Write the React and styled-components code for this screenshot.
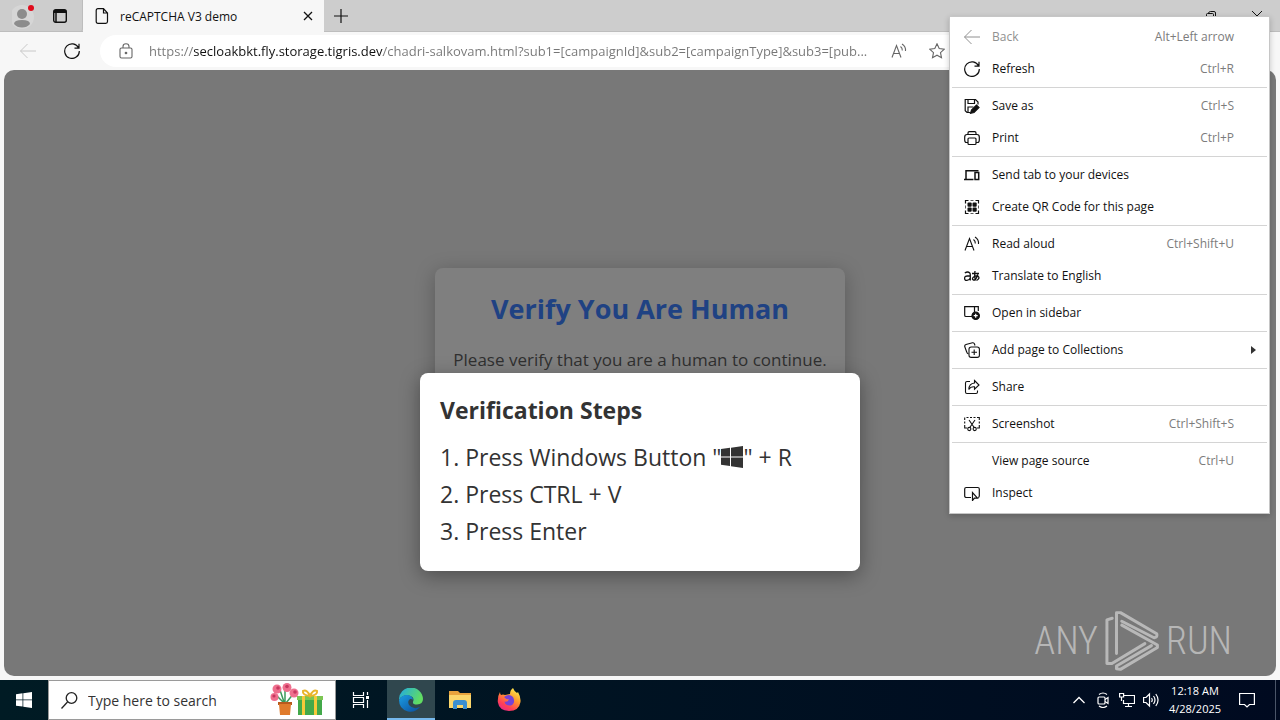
import React from "react";
import styled, { createGlobalStyle, css } from "styled-components";

const GlobalStyle = createGlobalStyle`
  *, *::before, *::after { box-sizing: border-box; }
  body { margin: 0; font-family: "Open Sans", "Noto Sans", sans-serif; }
  button, input { font: inherit; color: inherit; }
  button { border: 0; padding: 0; background: none; }
  svg { display: block; flex: none; }
`;

const Desktop = styled.div`
  position: relative;
  min-height: 100vh;
  display: flex;
  flex-direction: column;
  overflow: hidden;
`;

const Browser = styled.div`
  flex: 1;
  display: flex;
  flex-direction: column;
  background: #f7f7f7;
`;

const TabStrip = styled.header`
  height: 32px;
  display: flex;
  background: #cdcdcd;
  box-shadow: inset 0 -1px 0 #bdbdbd;
`;

const StripTools = styled.div`
  width: 83px;
  display: flex;
  align-items: center;
  padding-left: 12px;
  gap: 17px;
  border-right: 1px solid #bdbdbd;
  border-radius: 0 0 4px 0;
`;

const IconButton = styled.button`
  display: flex;
  align-items: center;
  justify-content: center;
  width: ${(p) => p.$width || 20}px;
  color: ${(p) => p.$color || "#111"};
`;

const Tab = styled.div`
  width: 241px;
  display: flex;
  align-items: center;
  gap: 11px;
  padding: 0 8px 0 12px;
  background: #f7f7f7;
  font-size: 12px;
  color: #111;
`;

const TabTitle = styled.span`
  flex: 1;
  white-space: nowrap;
`;

const WindowButtons = styled.div`
  margin-left: auto;
  display: flex;
`;

const Toolbar = styled.div`
  height: 38px;
  display: flex;
  align-items: center;
  padding: 0 328px 0 18px;
`;

const NavButtons = styled.div`
  display: flex;
  gap: 24px;
  margin-right: 18px;
`;

const AddressBar = styled.form`
  flex: 1;
  height: 32px;
  display: flex;
  align-items: center;
  gap: 15px;
  padding: 0 0 0 18px;
  border-radius: 16px 0 0 16px;
  background: #fff;
  color: #666;
`;

const AddressInput = styled.input`
  flex: 1;
  min-width: 0;
  border: 0;
  padding: 0;
  outline: 0;
  font-size: 13px;
  line-height: 24px;
  color: transparent;
  background: linear-gradient(to right, #767676 44px, #111 44px, #111 234px, #767676 234px);
  background-clip: text;
  -webkit-background-clip: text;
`;

const Viewport = styled.main`
  position: relative;
  flex: 1;
  margin: 0 4px 4px;
  border-radius: 10px;
  background: #787878;
  display: flex;
  align-items: center;
  justify-content: center;
`;

const Card = styled.section`
  width: 410px;
  height: 210px;
  padding: 20px 16px;
  border-radius: 8px;
  background: #7f7f7f;
  box-shadow: 0 4px 20px rgba(0, 0, 0, 0.25);
  text-align: center;
`;

const CardTitle = styled.h1`
  margin: 0;
  font-size: 27px;
  line-height: 42px;
  color: #1f4283;
`;

const CardText = styled.p`
  margin: 17px 0 0;
  font-size: 17px;
  line-height: 26px;
  color: #303030;
  white-space: nowrap;
`;

const DialogLayer = styled.div`
  position: absolute;
  inset: 50% 0 auto;
  display: flex;
  justify-content: center;
`;

const Dialog = styled.section`
  width: 440px;
  padding: 19px 20px 21px;
  border-radius: 8px;
  background: #fff;
  color: #333;
  box-shadow: 0 5px 20px rgba(0, 0, 0, 0.35);
`;

const DialogTitle = styled.h2`
  margin: 0 0 11px;
  font-size: 23px;
  line-height: 36px;
`;

const Steps = styled.ol`
  margin: 0;
  padding: 0;
  list-style-position: inside;
  font-size: 23px;
  line-height: 37px;
  white-space: nowrap;

  svg { display: inline-block; vertical-align: -2px; }
`;

const Watermark = styled.div`
  position: absolute;
  right: 44px;
  bottom: 4px;
  display: flex;
  align-items: center;
  gap: 6px;
  color: rgba(225, 225, 225, 0.62);
  font-family: "Roboto Condensed", "Liberation Sans Narrow", "Open Sans Condensed", Roboto, sans-serif;
  font-size: 38px;
  font-weight: 300;
  line-height: 62px;
`;

const Menu = styled.div`
  position: absolute;
  top: 16px;
  right: 10px;
  width: 321px;
  padding: 4px 2px;
  border: 1px solid #c6c6c6;
  background: #fff;
  box-shadow: 0 2px 6px rgba(0, 0, 0, 0.2);
`;

const MenuGroup = styled.div`
  & + & {
    margin-top: 2px;
    padding-top: 2px;
    border-top: 1px solid #d4d4d4;
  }
`;

const MenuItem = styled.button`
  width: 100%;
  height: 32px;
  display: grid;
  grid-template-columns: 16px 1fr auto 16px;
  align-items: center;
  column-gap: 12px;
  padding: 0 5px 0 12px;
  font-size: 12px;
  text-align: left;
  color: #111;
  ${(p) => p.disabled && css`color: #909090;`}
`;

const MenuLabel = styled.span`
  padding-bottom: 2px;
`;

const Shortcut = styled(MenuLabel)`
  color: #7c7c7c;
`;

const Taskbar = styled.footer`
  height: 40px;
  display: flex;
  background: linear-gradient(to right, #001b24, #000a20);
  color: #fff;
`;

const TaskButton = styled.button`
  width: ${(p) => p.$width || 48}px;
  display: flex;
  align-items: center;
  justify-content: center;
  margin-right: ${(p) => p.$gap || 0}px;
  color: #fff;
  ${(p) =>
    p.$active &&
    css`
      background: #30474e;
      box-shadow: inset 0 -2px 0 #76b9ed;
    `}
`;

const SearchBox = styled.label`
  width: 288px;
  display: flex;
  align-items: center;
  gap: 10px;
  padding: 0 11px 0 12px;
  border: 1px solid #9a9a9a;
  background: #fff;
  color: #222;
`;

const SearchInput = styled.input`
  flex: 1;
  min-width: 0;
  border: 0;
  padding: 0;
  outline: 0;
  font-size: 14px;
  background: none;

  &::placeholder { color: #333; opacity: 1; }
`;

const Tray = styled.div`
  margin-left: auto;
  display: flex;
  margin-right: 4px;
  padding-right: 8px;
  border-right: 1px solid #4a5568;
`;

const Clock = styled.time`
  width: 64px;
  padding-top: 2px;
  font-size: 11px;
  line-height: 18px;
  text-align: center;
`;

const Line = ({ w = 16, h = w, box = "0 0 16 16", sw = 1, children }) => (
  <svg width={w} height={h} viewBox={box} fill="none" stroke="currentColor" strokeWidth={sw} aria-hidden="true">
    {children}
  </svg>
);

const WindowsLogo = ({ size }) => (
  <svg width={size} height={size} viewBox="0 0 22 22" fill="currentColor" aria-hidden="true">
    <path d="M0 3.1 9 1.8V10.4H0zM10 1.7 22 0V10.4H10zM0 11.4H9V20L0 18.8zM10 11.4H22V22L10 20.2z" />
  </svg>
);

const icons = {
  back: <Line><path d="M.5 8H16M7.5 1 .5 8l7 7" /></Line>,
  refresh: <Line sw={1.2}><path d="M14.6 5A7.3 7.3 0 1 0 15.3 8M15 .8V5.2H10.5" /></Line>,
  save: (
    <Line sw={1.2}>
      <path d="M6 14.500H3L1.200 12.700V1.500H11.500L14 4V6.500M4 1.500V5.500h6.500V1.500M4 14.500V9h5.500" />
      <path d="m6.500 15.300 1-3.300 5-5 2.500 2.500-5 5z" fill="currentColor" />
    </Line>
  ),
  print: (
    <Line sw={1.2}>
      <path d="M4 12.5H2.5Q.7 12.5.7 10V7Q.7 4.5 3 4.5H13Q15.3 4.5 15.3 7v3q0 2.500-1.800 2.500H12M4 4.500V3q0-1.300 1.300-1.300h5.400Q12 1.700 12 3v1.500" />
      <rect x="4" y="8" width="8" height="6.500" rx="1" />
    </Line>
  ),
  devices: (
    <Line sw={1.5}>
      <path d="M0 12.500H9.500M2 12V3.700H14.500" />
      <rect x="11" y="5.500" width="3.700" height="7" />
    </Line>
  ),
  qr: (
    <Line sw={1.2}>
      <path d="M1.500 4.500V1.500H4.500M11.500 1.500h3V4.500M14.500 11.500v3H11.500M4.500 14.500H1.500V11.500" />
      <path d="M6.500 1.500h3M6.500 14.500h3M1.500 6.500v3M14.500 6.500v3" strokeWidth=".7" />
      <g fill="currentColor" stroke="none">
        <rect x="3.500" y="3.500" width="4.200" height="4.200" rx="1" />
        <rect x="8.500" y="3.500" width="4.200" height="4.200" rx="1" />
        <rect x="3.500" y="8.500" width="4.200" height="4.200" rx="1" />
        <rect x="8.500" y="8.500" width="4.200" height="4.200" rx="1" />
      </g>
    </Line>
  ),
  aloud: (
    <Line sw={1.1}>
      <path d="m1 14.500 4.500-12 4.500 12M2.700 10.500h5.700M9.500 3.500q2 1.500 1.800 4M11 1q4 2.500 3.500 7" />
    </Line>
  ),
  translate: (
    <Line sw={1.3}>
      <path d="M.8 5q3-2 5 0Q6.300 5.500 6.300 7v5.500M6.300 8H3.500Q.6 8 .6 10.300T3 12.300q2.300 0 3.300-2.300" />
      <path d="M8 5.500h7M11 3q-.8 5 .5 9.500M13.800 6.500q-1.500 5.500-4.300 5.500-1.800-.5-.5-2.500 2.500-2.300 5-1.300 2.500 2-1.500 4.300" />
    </Line>
  ),
  sidebar: (
    <Line sw={1.2}>
      <path d="M8 11.500H2Q.7 11.500.7 10.200V1.700H14.300V6M10.500 1.700V7" />
      <circle cx="11.700" cy="10.700" r="3.700" fill="currentColor" />
      <path d="M11.700 8.700v4M9.700 10.700h4" stroke="#fff" />
    </Line>
  ),
  collections: (
    <Line sw={1.1}>
      <path d="M4.500 12Q3 11.500 2.500 9.500L.8 4.800Q.3 3 2 2.500L8.500.8q1.500-.3 2 1.200l.5 1.500" />
      <rect x="5" y="5" width="10.400" height="10.400" rx="2.200" />
      <path d="M10.200 7.500v5.500M7.500 10.200H13" />
    </Line>
  ),
  share: (
    <Line sw={1.1}>
      <path d="M6 2.500H3Q1.500 2.500 1.500 4v9q0 1.500 1.500 1.500h9q1.500 0 1.500-1.500v-1.500" />
      <path d="M10.500 1.500 15 6l-4.500 4.200V7.800Q6.500 7.500 4.800 10.500 5 4.500 10.500 4z" />
    </Line>
  ),
  screenshot: (
    <Line sw={1.1}>
      <path d="M2.500 1.500H4.500M6 1.500H8M9.500 1.500h2M13 1.500h2.300V4M15.300 5.500v2M15.300 9v3H13M3 12H.7V9M.7 7.500v-2M.7 4V1.500" />
      <path d="m5 4 5.200 7.500M11 4 5.800 11.500" />
      <circle cx="5.300" cy="13" r="1.600" />
      <circle cx="10.700" cy="13" r="1.600" />
    </Line>
  ),
  inspect: (
    <Line sw={1.2}>
      <path d="M7 12.500H2.500Q.7 12.500.7 11V4Q.7 2.500 2.200 2.500H13.800Q15.300 2.500 15.300 4v7q0 1.500-1.500 1.500" />
      <path d="M8.500 7.500v8l2-2.300h3z" />
    </Line>
  ),
};

const menuGroups = [
  [
    { icon: "back", label: "Back", keys: "Alt+Left arrow", disabled: true },
    { icon: "refresh", label: "Refresh", keys: "Ctrl+R" },
  ],
  [
    { icon: "save", label: "Save as", keys: "Ctrl+S" },
    { icon: "print", label: "Print", keys: "Ctrl+P" },
  ],
  [
    { icon: "devices", label: "Send tab to your devices" },
    { icon: "qr", label: "Create QR Code for this page" },
  ],
  [
    { icon: "aloud", label: "Read aloud", keys: "Ctrl+Shift+U" },
    { icon: "translate", label: "Translate to English" },
  ],
  [{ icon: "sidebar", label: "Open in sidebar" }],
  [{ icon: "collections", label: "Add page to Collections", submenu: true }],
  [{ icon: "share", label: "Share" }],
  [{ icon: "screenshot", label: "Screenshot", keys: "Ctrl+Shift+S" }],
  [
    { label: "View page source", keys: "Ctrl+U" },
    { icon: "inspect", label: "Inspect" },
  ],
];

const ContextMenu = () => (
  <Menu role="menu" aria-label="Page menu">
    {menuGroups.map((group, i) => (
      <MenuGroup key={i} role="group">
        {group.map(({ icon, label, keys, disabled, submenu }) => (
          <MenuItem key={label} type="button" role="menuitem" disabled={disabled}>
            {icon ? icons[icon] : <span />}
            <MenuLabel>{label}</MenuLabel>
            <Shortcut>{keys}</Shortcut>
            {submenu && (
              <svg width="16" height="10" viewBox="0 0 16 10" aria-hidden="true">
                <path d="M5 1v8l5-4z" fill="#333" />
              </svg>
            )}
          </MenuItem>
        ))}
      </MenuGroup>
    ))}
  </Menu>
);

const BrowserHeader = () => (
  <>
    <TabStrip>
      <StripTools>
        <IconButton type="button" aria-label="Profile" $width={24}>
          <svg width="24" height="28" viewBox="0 0 24 28" aria-hidden="true">
            <circle cx="10" cy="15" r="12" fill="#d6d6d6" />
            <circle cx="10" cy="12" r="5" fill="#8c8c8c" />
            <path d="M2 22q0-4 8-4t8 4q-3 3.500-8 3.500T2 22z" fill="#8c8c8c" />
            <circle cx="19" cy="6" r="3" fill="#e00b1c" />
          </svg>
        </IconButton>
        <IconButton type="button" aria-label="Tab actions" $width={14}>
          <Line w={14} box="0 0 14 14" sw={1.4}>
            <rect x=".7" y=".7" width="12.600" height="12.600" rx="2" />
            <path d="M1 2.500h12" strokeWidth="3" />
            <path d="M3 3v10" strokeWidth="1.500" />
          </Line>
        </IconButton>
      </StripTools>
      <Tab>
        <Line w={14} h={16} box="0 0 14 16" sw={1.2}>
          <path d="M3 .7H8.500L12.500 5V13.500q0 1.800-1.800 1.800H3Q1.200 15.300 1.200 13.500V2.500Q1.200.7 3 .7zM8.500.7V5h4" />
        </Line>
        <TabTitle>reCAPTCHA V3 demo</TabTitle>
        <IconButton type="button" aria-label="Close tab" $width={16}>
          <Line w={10} box="0 0 10 10" sw={1.3}><path d="m1 1 8 8M9 1 1 9" /></Line>
        </IconButton>
      </Tab>
      <IconButton type="button" aria-label="New tab" $width={34}>
        <Line w={14} box="0 0 14 14" sw={1.2}><path d="M7 0v14M0 7h14" /></Line>
      </IconButton>
      <WindowButtons>
        <IconButton type="button" aria-label="Minimize" $width={46}>
          <Line w={10} box="0 0 10 10"><path d="M0 5.500h10" /></Line>
        </IconButton>
        <IconButton type="button" aria-label="Restore" $width={46}>
          <Line w={10} box="0 0 10 10"><path d="M2.500 2.500V2Q3 .5 4.500.5H8q1.500 0 1.500 1.500v4q0 1-1.500 1.500" /><rect x=".5" y="2.500" width="7" height="7" rx="1" /></Line>
        </IconButton>
        <IconButton type="button" aria-label="Close window" $width={46}>
          <Line w={10} box="0 0 10 10"><path d="m0 0 10 10M10 0 0 10" /></Line>
        </IconButton>
      </WindowButtons>
    </TabStrip>
    <Toolbar>
      <NavButtons>
        <IconButton type="button" aria-label="Back" disabled $color="#c8c8c8">{icons.back}</IconButton>
        <IconButton type="button" aria-label="Reload">{icons.refresh}</IconButton>
      </NavButtons>
      <AddressBar onSubmit={(e) => e.preventDefault()}>
        <Line w={16} sw={1.1}>
          <rect x="2" y="5" width="12" height="10" rx="1.500" />
          <path d="M5 5V3.500Q5 .7 8 .7t3 2.800V5" />
          <circle cx="8" cy="10" r=".8" fill="currentColor" />
        </Line>
        <AddressInput
          aria-label="Address"
          defaultValue="https://secloakbkt.fly.storage.tigris.dev/chadri-salkovam.html?sub1=[campaignId]&sub2=[campaignType]&sub3=[pub..."
        />
        <IconButton type="button" aria-label="Read aloud" $width={16} $color="#666">{icons.aloud}</IconButton>
        <IconButton type="button" aria-label="Add to favorites" $width={30} $color="#666">
          <Line sw={1.1}><path d="m8 .8 2.200 4.700 5.100.6-3.800 3.500 1 5.100L8 12.200l-4.500 2.500 1-5.100L.7 6.100l5.100-.6z" /></Line>
        </IconButton>
      </AddressBar>
    </Toolbar>
  </>
);

const AnyRunMark = () => (
  <Watermark>
    <span>ANY</span>
    <svg width="56" height="62" viewBox="267 58 168 188" fill="none" stroke="currentColor" strokeWidth="9" strokeLinejoin="round" strokeLinecap="round" role="img" aria-label="Play">
      <path d="M304 190V66L316 66 426 130Q430 140 418 142L320 92M291 83 275 88V220L290 220 390 160M320 104 428 164V172L316 238 304 236V228L410 166" />
    </svg>
    <span>RUN</span>
  </Watermark>
);

const GiftArt = () => (
  <svg width="54" height="34" viewBox="0 0 54 34" aria-hidden="true">
    <path d="M14 20 6 12M15 20 15 8M16 20 24 10M14 19 10 7" stroke="#3a9a5b" strokeWidth="1.500" />
    <g fill="#ee6f8d">
      <circle cx="7" cy="6" r="4.500" /><circle cx="17" cy="4.500" r="4.500" />
      <circle cx="24" cy="10" r="4.500" /><circle cx="4.500" cy="14" r="4" />
    </g>
    <g fill="#c7375f">
      <circle cx="8" cy="5" r="1.800" /><circle cx="17" cy="3.500" r="1.800" />
      <circle cx="25" cy="9" r="1.800" /><circle cx="4" cy="13" r="1.600" />
    </g>
    <path d="M8 19h14v3H8z" fill="#b85a1e" />
    <path d="M9 21h12l-1 11H10z" fill="#e07b2c" />
    <path d="M28 15h24v17H28z" fill="#43a94a" />
    <path d="M27 13h26v4H27z" fill="#7cc653" />
    <path d="M32 13h3v19h-3zM44 13h3v19h-3z" fill="#f5c93a" />
    <path d="M40 13q-8-1-7-5 4-2 7 5 3-7 7-5 1 4-7 5z" fill="none" stroke="#e9b52b" strokeWidth="2" />
  </svg>
);

const EdgeIcon = () => (
  <svg width="24" height="24" viewBox="0 0 24 24" aria-hidden="true">
    <defs>
      <linearGradient id="edgeTop" x1="0" y1="0" x2="1" y2="0.400">
        <stop offset="0" stopColor="#1fa9e6" /><stop offset="1" stopColor="#61dd62" />
      </linearGradient>
      <linearGradient id="edgeBase" x1="0" y1="0" x2="1" y2="1">
        <stop offset="0" stopColor="#1b9de2" /><stop offset="1" stopColor="#0b4d9c" />
      </linearGradient>
    </defs>
    <path d="M0 12A12 12 0 0 1 24 11q0 5-6 5.500-4.500 0-4-2.500 2-5-4-6.500Q3 6.500 0 12z" fill="url(#edgeTop)" />
    <path d="M0 12q3-5.500 9-5 5 1 5 5-1-1.500-3-1-3 2-1 6 4 5 11 2Q16 25 9 23.500 0 21 0 12z" fill="url(#edgeBase)" />
  </svg>
);

const FolderIcon = () => (
  <svg width="22" height="20" viewBox="0 0 22 20" aria-hidden="true">
    <path d="M0 1h9l2 2h11v15H0z" fill="#e8a33d" />
    <path d="M0 5h22v13H0z" fill="#fbd66b" />
    <path d="M4 19v-6q0-3 3-3h8q3 0 3 3v6h-4v-4H8v4z" fill="#3b8fd0" />
  </svg>
);

const FirefoxIcon = () => (
  <svg width="24" height="24" viewBox="0 0 24 24" aria-hidden="true">
    <defs>
      <linearGradient id="foxFire" x1="0.800" y1="0" x2="0.200" y2="1">
        <stop offset="0" stopColor="#fff14f" /><stop offset=".4" stopColor="#ff9a2c" />
        <stop offset=".75" stopColor="#ff4055" /><stop offset="1" stopColor="#e6268d" />
      </linearGradient>
    </defs>
    <path d="M3 4q0 2 1 3 2-1 4 0l5-1q0-4 3-6 1 3 4 5l1-1q3 5 2.500 10Q22 23 12 23 2 22.500.8 14 .5 8 3 4z" fill="url(#foxFire)" />
    <path d="M7 9q5-4 9 0 3 6-2 8.500-6 .5-6.500-4 3 1 4.500-2-3 0-5-2.500z" fill="#7542d8" />
  </svg>
);

const WindowsTaskbar = () => (
  <Taskbar>
    <TaskButton type="button" aria-label="Start"><WindowsLogo size={16} /></TaskButton>
    <SearchBox>
      <Line w={17} box="0 0 17 17" sw={1.300}><circle cx="10.500" cy="6" r="5.300" /><path d="M6.500 10 .5 16.500" /></Line>
      <SearchInput aria-label="Search" placeholder="Type here to search" />
      <GiftArt />
    </SearchBox>
    <TaskButton type="button" aria-label="Task view" $width={50} $gap={1}>
      <Line w={18} box="0 0 18 18" sw={1.200}>
        <path d="M1.500 1v3.500h10V1M1.500 17v-3.500h10V17M15.500 1v3M15.500 9v8" />
        <path d="M1.500 6.500h10v5h-10z" /><path d="M14 6.500h3" strokeWidth="3" />
      </Line>
    </TaskButton>
    <TaskButton type="button" aria-label="Microsoft Edge" $active $gap={1}><EdgeIcon /></TaskButton>
    <TaskButton type="button" aria-label="File Explorer" $gap={1}><FolderIcon /></TaskButton>
    <TaskButton type="button" aria-label="Firefox"><FirefoxIcon /></TaskButton>
    <Tray>
      <TaskButton type="button" aria-label="Show hidden icons" $width={24}>
        <Line w={12} h={8} box="0 0 12 8" sw={1.300}><path d="m.5 7 5.500-5.500L11.500 7" /></Line>
      </TaskButton>
      <TaskButton type="button" aria-label="Meet now" $width={24}>
        <Line sw={1.200}>
          <rect x="3" y="5" width="7" height="7" rx="1" />
          <path d="m10 7.500 3-2v6l-3-2M4 2.500q4-3 8 0M4 14q4 3 8 0" />
        </Line>
      </TaskButton>
      <TaskButton type="button" aria-label="Network" $width={24}>
        <Line sw={1.200}><path d="M5 3.500h10.500v8H4.500V8M6 14.500h7M9.500 11.500v3M.6 1.500h4v3.500h-4zM2.500 5v4" /></Line>
      </TaskButton>
      <TaskButton type="button" aria-label="Volume" $width={24}>
        <Line sw={1.200}><path d="M.6 5.500H3L6.500 2v12L3 10.500H.6zM8.500 6q1.500 2 0 4M10.500 4q3 4 0 8M12.800 2q4.500 6 0 12" /></Line>
      </TaskButton>
      <Clock dateTime="2025-04-28T00:18">12:18 AM<br />4/28/2025</Clock>
      <TaskButton type="button" aria-label="Notifications" $width={40}>
        <Line w={16} sw={1.200}><path d="M.6 1.500h14.800v11H10.500L8 15l-2.500-2.500H.6z" /></Line>
      </TaskButton>
    </Tray>
  </Taskbar>
);

export default function App() {
  return (
    <Desktop>
      <GlobalStyle />
      <Browser>
        <BrowserHeader />
        <Viewport>
          <Card>
            <CardTitle>Verify You Are Human</CardTitle>
            <CardText>Please verify that you are a human to continue.</CardText>
          </Card>
          <DialogLayer>
            <Dialog role="dialog" aria-labelledby="steps-title">
              <DialogTitle id="steps-title">Verification Steps</DialogTitle>
              <Steps>
                <li>Press Windows Button "<WindowsLogo size={22} />" + R</li>
                <li>Press CTRL + V</li>
                <li>Press Enter</li>
              </Steps>
            </Dialog>
          </DialogLayer>
          <AnyRunMark />
        </Viewport>
      </Browser>
      <WindowsTaskbar />
      <ContextMenu />
    </Desktop>
  );
}
